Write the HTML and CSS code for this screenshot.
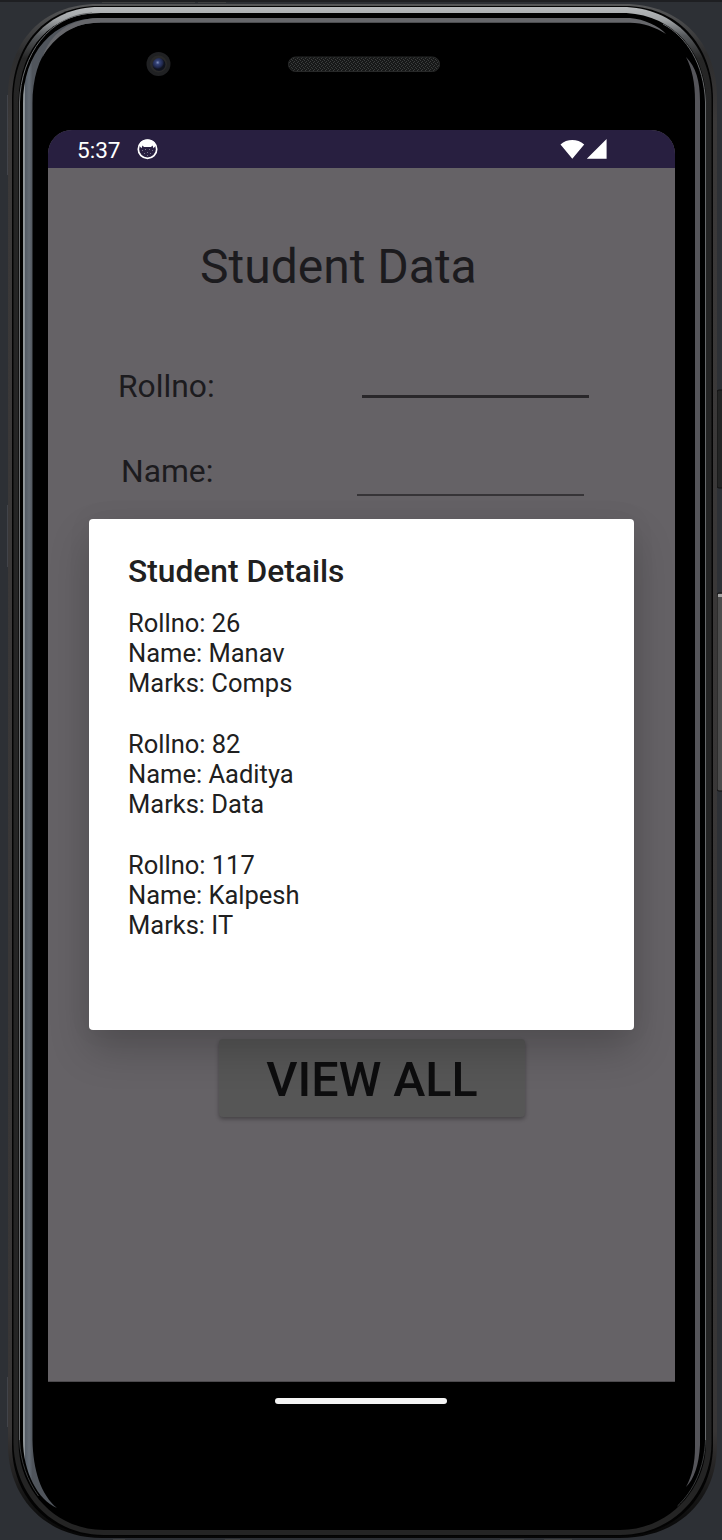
FILE: index.html
```html
<!DOCTYPE html>
<html lang="en">
<head>
<meta charset="utf-8">
<title>Student Data</title>
<link rel="stylesheet" href="styles.css">
</head>
<body>
<main class="stage">
  <svg class="frame" width="722" height="1540" viewBox="0 0 722 1540" fill="none">
    <defs>
      <linearGradient id="rim" x1="0" y1="0" x2="0" y2="1540" gradientUnits="userSpaceOnUse">
        <stop offset="0" stop-color="#5a5b5c"/><stop offset=".035" stop-color="#2d2d2e"/><stop offset=".08" stop-color="#3b3939"/><stop offset=".93" stop-color="#383636"/><stop offset=".97" stop-color="#171717"/><stop offset="1" stop-color="#050505"/>
      </linearGradient>
      <linearGradient id="silver" x1="0" y1="7" x2="0" y2="110" gradientUnits="userSpaceOnUse">
        <stop offset="0" stop-color="#b7babc"/><stop offset=".12" stop-color="#a2a5a7"/><stop offset=".28" stop-color="#55585b"/><stop offset=".5" stop-color="#262626"/><stop offset="1" stop-color="#242424"/>
      </linearGradient>
      <linearGradient id="glass" x1="23" y1="0" x2="32.500" y2="0" gradientUnits="userSpaceOnUse">
        <stop offset="0" stop-color="#959c9f"/><stop offset=".17" stop-color="#8b9297"/><stop offset=".24" stop-color="#535b65"/><stop offset=".65" stop-color="#626a73"/><stop offset="1" stop-color="#50555c"/>
      </linearGradient>
      <pattern id="mesh" width="4" height="4" patternUnits="userSpaceOnUse">
        <path fill="#171818" d="M0 0h4v4H0z"/><path fill="#3b3d3d" d="M0 0h1v1H0zM2 1h1v1H2zM1 2h1v1H1zM3 3h1v1H3z"/>
      </pattern>
      <radialGradient id="lens" cx=".4" cy=".35">
        <stop offset="0" stop-color="#8291bd"/><stop offset=".3" stop-color="#344276"/><stop offset=".75" stop-color="#20284c"/><stop offset="1" stop-color="#10131e"/>
      </radialGradient>
    </defs>
    <path fill="#1e1f22" d="M0 0h722v2H0z"/>
    <path stroke="#3f4041" d="M102 2.500h93m3 0h28M113 1539.500h12m100 0h15m260 0h24m20 0h28"/>
    <path stroke="#42444a" d="M7.500 95v80m0 330v62m0 810v50"/>
    <rect x="717" y="390" width="7" height="98" rx="2" fill="#232424" stroke="#101010"/>
    <rect x="717" y="593" width="7" height="198" rx="2" fill="#4b4b4b" stroke="#111"/>
    <path fill="#a1a1a1" d="M718 594h4v3h-4z"/>
    <path fill="url(#rim)" d="M8 96C8 42 42 4 98 4H624C681 4 717 43 717 98V1445C717 1500 678 1538 620 1538H102C45 1538 8 1497 8 1445Z"/>
    <path fill="#030303" d="M12 98C13 45 45 6 98 6H624C677 6 712 44 713 98V1445C713 1496 676 1536 620 1536H102C48 1536 12 1496 12 1445Z"/>
    <path fill="url(#silver)" d="M13.500 99C14 46 48 7 99 7H622C675 7 711 47 711.500 99V1443C711 1494 672 1535 620 1535H104C51 1535 14 1493 13.500 1443Z"/>
    <path fill="#000" d="M18.500 100C20 47 51 13 101 13H622C670 13 705 49 706 100V1443C706 1490 668 1530 620 1530H104C55 1530 19 1490 18.500 1443Z"/>
    <path stroke="#67696b" d="M19.500 1440V102C21 54 50 15 92 13M705.500 1440V102C704 64 687 37 663 24"/>
    <path stroke="#383a3b" d="M19.500 1440c1 22 8 41 19 56M705.500 1440c-1 28-12 51-28 66"/>
    <path fill="url(#glass)" d="M23 104C23 53 53 18 100 18V22.500C58 23 32.500 53 32.500 104V1440C33 1470 41 1495 57 1508C38 1500 23 1472 23 1440Z"/>
    <path fill="#66676b" d="M98 18H630C644 19 659 26 666 34C655 27 643 23 630 22.800H98C75 23 55 35 42 58C51 33 70 19 98 18Z"/>
    <path fill="#55555a" d="M686 57C696 67 700 81 700 101V1445C699 1465 694 1479 686 1487C692 1476 695 1463 695 1447V101C695 82 692 69 686 57Z"/>
    <circle cx="158.500" cy="64" r="12" fill="#202123"/>
    <circle cx="158.500" cy="64" r="8.500" fill="#292929"/>
    <circle cx="159" cy="64.500" r="6.500" fill="url(#lens)"/>
    <rect x="288.500" y="57" width="151" height="14.500" rx="7" fill="url(#mesh)" stroke="#272828"/>
  </svg>

  <section class="screen">
    <header class="statusbar">
      <span class="clock">5:37</span>
      <svg class="cat" width="22" height="22" viewBox="0 0 22 22">
        <circle cx="11.500" cy="11.200" r="9.200" fill="none" stroke="#fff" stroke-width="1.700"/>
        <path fill="#fff" d="M3 7.500C4.500 3 7.500 1.500 11.500 1.500S18.500 3 20 7.500L17.500 10.200 16.500 7.500 15 9H8L6.500 7.500 5.500 10.200Z"/>
        <path fill="#777389" d="M6 12h1v1H6zM9 11h1v1H9zM13 11h1v1h-1zM16 12h1v1h-1zM8 15h1v1H8zM11 14h1v1h-1zM14 15h1v1h-1zM11 17h1v1h-1z"/>
      </svg>
      <svg class="signals" width="48" height="22" viewBox="0 0 48 22">
        <path fill="#fff" d="M.5 6.500C7 .6 17.500.6 24.200 6.500L12.300 20.800ZM46.600 1V20.800H26.800Z"/>
      </svg>
    </header>
    <div class="activity">
      <h1 class="title">Student Data</h1>
      <div class="row row-roll"><label>Rollno:</label><span class="field field-focus"></span></div>
      <div class="row row-name"><label>Name:</label><span class="field"></span></div>
      <button class="view-all">VIEW ALL</button>
    </div>
    <article class="dialog">
      <h2>Student Details</h2>
      <p>Rollno: 26<br>Name: Manav<br>Marks: Comps</p>
      <p>Rollno: 82<br>Name: Aaditya<br>Marks: Data</p>
      <p>Rollno: 117<br>Name: Kalpesh<br>Marks: IT</p>
    </article>
  </section>
  <div class="home-bar"></div>
</main>
</body>
</html>
```
FILE: styles.css
```css
* { box-sizing: border-box; }
body { margin: 0; background: #2d3035; font-family: Roboto, sans-serif; }
.stage { position: relative; width: 722px; height: 1540px; padding-top: 130px; overflow: hidden; }
.frame { position: absolute; inset: 0; }
.screen { position: relative; width: 627px; height: 1252px; margin-left: 48px; background: #656266; border-radius: 24px 24px 0 0; overflow: hidden; border-bottom: 1px solid #4c4a4d; }
.statusbar { display: flex; height: 38px; padding: 0 67px 0 29px; align-items: center; background: #281f40; color: #fff; }
.clock { width: 59px; font-size: 22.600px; line-height: 38px; padding-top: 3px; }
.cat { display: block; }
.signals { display: block; margin-left: auto; }
.activity { display: flex; flex-direction: column; color: #1c1b1e; }
.title { margin: 69px 0 0 152px; font-size: 48px; font-weight: 400; line-height: 60px; white-space: nowrap; }
.row { display: flex; justify-content: space-between; font-size: 31.800px; line-height: 38px; }
.row-roll { margin: 70px 86px 0 70px; }
.row-name { margin: 47px 91px 0 73px; }
.field { width: 227px; height: 31px; border-bottom: 3px solid #29272a; }
.row-name .field { height: 44px; border-bottom: 2px solid #363437; }
.view-all { width: 306px; height: 78px; margin: 543px 0 0 171px; padding: 0; border: 0; border-radius: 4px; background: #565656; color: #0d0d0e; font: 500 48.400px/82px Roboto, sans-serif; box-shadow: 0 2px 4px #0005; }
.dialog { position: absolute; left: 41px; top: 389px; width: 545px; height: 511px; padding: 33px 39px; border-radius: 4px; background: #fff; color: #202020; box-shadow: 0 20px 40px rgba(0,0,0,.2), 0 0 26px rgba(0,0,0,.05); }
.dialog h2 { margin: 0 0 16px; font-size: 31.750px; font-weight: 500; line-height: 40px; }
.dialog p { margin: 0 0 30.200px; font-size: 25.500px; line-height: 30.200px; }
.home-bar { position: relative; width: 172px; height: 6px; margin: 16px 0 0 275px; border-radius: 3px; background: #f4f4f4; }
```
